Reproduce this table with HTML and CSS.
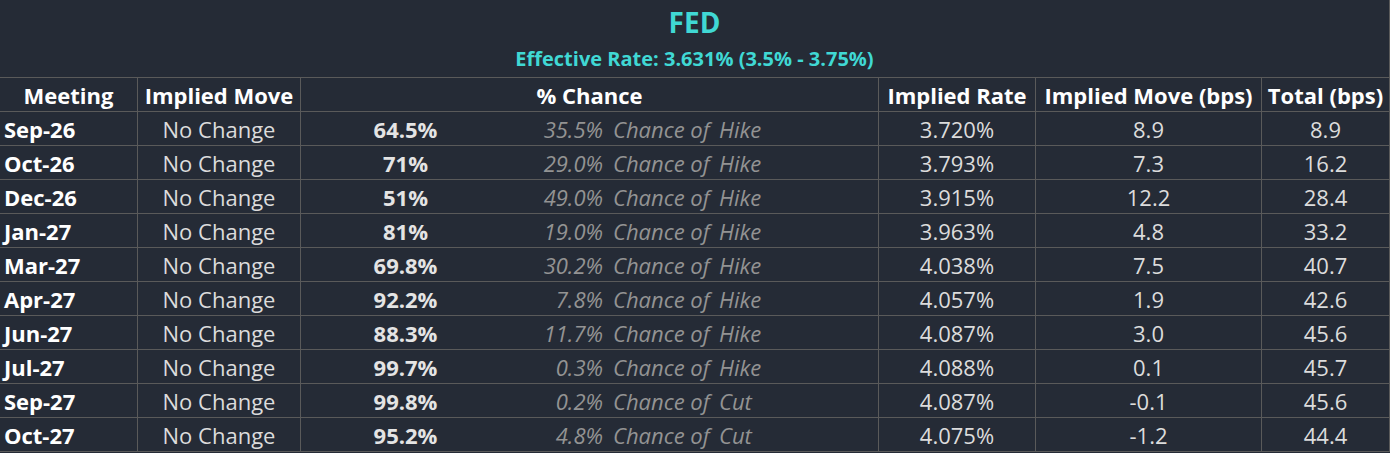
FILE: index.html
```html
<!DOCTYPE html>
<html lang="en">
<head>
<meta charset="utf-8">
<title>FED</title>
<link rel="stylesheet" href="styles.css">
</head>
<body>
<div class="panel">
  <header class="title-block">
    <h1 class="title">FED</h1>
    <p class="subtitle">Effective Rate: 3.631% (3.5% - 3.75%)</p>
  </header>
  <div class="grid">
    <div class="cell head">Meeting</div>
    <div class="cell head">Implied Move</div>
    <div class="cell head">% Chance</div>
    <div class="cell head">Implied Rate</div>
    <div class="cell head">Implied Move (bps)</div>
    <div class="cell head">Total (bps)</div>

    <div class="cell date">Sep-26</div><div class="cell move">No Change</div>
    <div class="cell chance"><span class="p">64.5%</span><span class="alt">35.5%</span><span class="of">Chance of</span><span class="kind">Hike</span></div>
    <div class="cell num">3.720%</div><div class="cell num">8.9</div><div class="cell num">8.9</div>

    <div class="cell date">Oct-26</div><div class="cell move">No Change</div>
    <div class="cell chance"><span class="p">71%</span><span class="alt">29.0%</span><span class="of">Chance of</span><span class="kind">Hike</span></div>
    <div class="cell num">3.793%</div><div class="cell num">7.3</div><div class="cell num">16.2</div>

    <div class="cell date">Dec-26</div><div class="cell move">No Change</div>
    <div class="cell chance"><span class="p">51%</span><span class="alt">49.0%</span><span class="of">Chance of</span><span class="kind">Hike</span></div>
    <div class="cell num">3.915%</div><div class="cell num">12.2</div><div class="cell num">28.4</div>

    <div class="cell date">Jan-27</div><div class="cell move">No Change</div>
    <div class="cell chance"><span class="p">81%</span><span class="alt">19.0%</span><span class="of">Chance of</span><span class="kind">Hike</span></div>
    <div class="cell num">3.963%</div><div class="cell num">4.8</div><div class="cell num">33.2</div>

    <div class="cell date">Mar-27</div><div class="cell move">No Change</div>
    <div class="cell chance"><span class="p">69.8%</span><span class="alt">30.2%</span><span class="of">Chance of</span><span class="kind">Hike</span></div>
    <div class="cell num">4.038%</div><div class="cell num">7.5</div><div class="cell num">40.7</div>

    <div class="cell date">Apr-27</div><div class="cell move">No Change</div>
    <div class="cell chance"><span class="p">92.2%</span><span class="alt">7.8%</span><span class="of">Chance of</span><span class="kind">Hike</span></div>
    <div class="cell num">4.057%</div><div class="cell num">1.9</div><div class="cell num">42.6</div>

    <div class="cell date">Jun-27</div><div class="cell move">No Change</div>
    <div class="cell chance"><span class="p">88.3%</span><span class="alt">11.7%</span><span class="of">Chance of</span><span class="kind">Hike</span></div>
    <div class="cell num">4.087%</div><div class="cell num">3.0</div><div class="cell num">45.6</div>

    <div class="cell date">Jul-27</div><div class="cell move">No Change</div>
    <div class="cell chance"><span class="p">99.7%</span><span class="alt">0.3%</span><span class="of">Chance of</span><span class="kind">Hike</span></div>
    <div class="cell num">4.088%</div><div class="cell num">0.1</div><div class="cell num">45.7</div>

    <div class="cell date">Sep-27</div><div class="cell move">No Change</div>
    <div class="cell chance"><span class="p">99.8%</span><span class="alt">0.2%</span><span class="of">Chance of</span><span class="kind">Cut</span></div>
    <div class="cell num">4.087%</div><div class="cell num">-0.1</div><div class="cell num">45.6</div>

    <div class="cell date">Oct-27</div><div class="cell move">No Change</div>
    <div class="cell chance"><span class="p">95.2%</span><span class="alt">4.8%</span><span class="of">Chance of</span><span class="kind">Cut</span></div>
    <div class="cell num">4.075%</div><div class="cell num">-1.2</div><div class="cell num">44.4</div>
  </div>
</div>
</body>
</html>
```
FILE: styles.css
```css
html, body {
  margin: 0;
  padding: 0;
  background: #252b36;
}
body {
  width: 1390px;
  height: 453px;
  overflow: hidden;
  font-family: "Open Sans", "Liberation Sans", sans-serif;
  color: #dcdcdc;
}
.panel {
  width: 1390px;
}
.title-block {
  height: 77px;
  box-sizing: border-box;
  border-right: 1px solid #5a5a5a;
  display: flex;
  flex-direction: column;
  align-items: center;
  color: #40d8d4;
}
.title {
  margin: 0;
  font-size: 28px;
  font-weight: 700;
  line-height: 36px;
  padding-top: 4px;
}
.subtitle {
  margin: 0;
  font-size: 20px;
  font-weight: 700;
  line-height: 28px;
  padding-top: 5px;
}
.grid {
  display: grid;
  grid-template-columns: 138px 163px 578px 157px 226px 128px;
  grid-auto-rows: 34px;
  border-top: 1px solid #5a5a5a;
}
.cell {
  box-sizing: border-box;
  border-right: 1px solid #5a5a5a;
  border-bottom: 1px solid #5a5a5a;
  font-size: 22px;
  line-height: 33px;
  padding-top: 1px;
  white-space: nowrap;
  overflow: hidden;
}
.head {
  font-weight: 700;
  color: #ffffff;
  text-align: center;
}
.date {
  font-weight: 700;
  color: #ffffff;
  padding-left: 4px;
}
.move, .num {
  text-align: center;
}
.chance {
  display: grid;
  grid-template-columns: 209px 93px 106px 1fr;
}
.chance .p {
  text-align: center;
  font-weight: 700;
  color: #e4e4e4;
}
.chance .alt,
.chance .of,
.chance .kind {
  font-style: italic;
  color: #939393;
}
.chance .alt {
  text-align: right;
}
.chance .of,
.chance .kind {
  padding-left: 10px;
}
```
